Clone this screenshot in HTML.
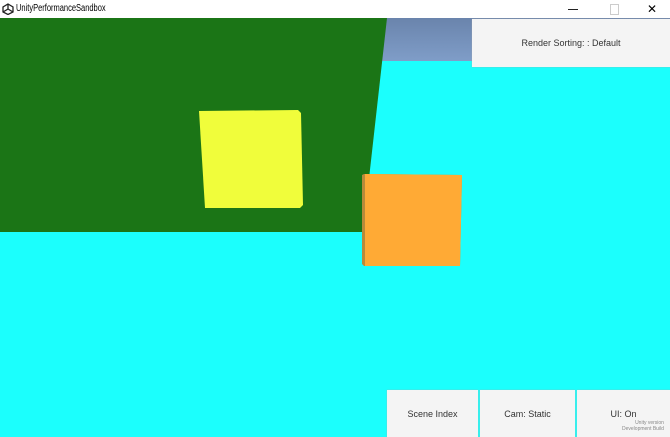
<!DOCTYPE html>
<html><head><style>
body{margin:0;width:670px;height:437px;overflow:hidden;position:relative;font-family:"Liberation Sans",sans-serif;background:#1bfffd}
.title{position:absolute;left:0;top:0;width:670px;height:18px;background:#fff;font-size:10px;line-height:18px}
.btn{position:absolute;background:#f4f4f4;font-size:9px;color:#333;display:flex;align-items:center;justify-content:center;box-shadow:0 0 1px #aaa}
</style></head><body>
<svg width="670" height="437" style="position:absolute;left:0;top:0">
<defs><linearGradient id="sky" x1="0" y1="0" x2="0" y2="1"><stop offset="0" stop-color="#6a84ac"/><stop offset="1" stop-color="#7f9dc8"/></linearGradient></defs>
<rect x="0" y="0" width="670" height="437" fill="#1bfffd"/>
<rect x="380" y="18" width="290" height="43" fill="url(#sky)"/>
<polygon points="0,18 387,18 363,232 0,232" fill="#1b7516"/>
<polygon points="199,111 298,110 301,113 303,205 300,208 205,208" fill="#f0fd3b"/>
<polygon points="362,175 364,174 462,175 460,266 364,266 362,264" fill="#b98a3a"/>
<polygon points="365,174 462,175 460,266 365,266" fill="#ffaa35"/>
</svg>
<div class="title">
<svg width="12" height="12" viewBox="0 0 12 12" style="position:absolute;left:2px;top:3px"><path d="M6 1 L11 4 L11 9 L6 11.5 L1 9 L1 4 Z M6 1 L6 6 L1 9 M6 6 L11 9" fill="none" stroke="#222" stroke-width="1.3"/></svg>
<span style="position:absolute;left:16px;transform:scaleX(0.75);transform-origin:left">UnityPerformanceSandbox</span>
<span style="position:absolute;left:568px;top:9px;width:10px;height:1px;background:#222"></span><span style="position:absolute;left:610px;top:4px;width:7px;height:9px;border:1px solid #ccc"></span><span style="position:absolute;left:647px;top:0;font-size:12px">✕</span></div>
<div class="btn" style="left:472px;top:19px;width:198px;height:48px">Render Sorting: : Default</div>
<div class="btn" style="left:387px;top:390px;width:91px;height:47px">Scene Index</div>
<div class="btn" style="left:480px;top:390px;width:95px;height:47px">Cam: Static</div>
<div class="btn" style="left:577px;top:390px;width:93px;height:47px">UI: On</div>
<div style="position:absolute;left:622px;top:420px;font-size:5px;color:#888;text-align:right;line-height:6px">Unity version<br>Development Build</div>
</body></html>
